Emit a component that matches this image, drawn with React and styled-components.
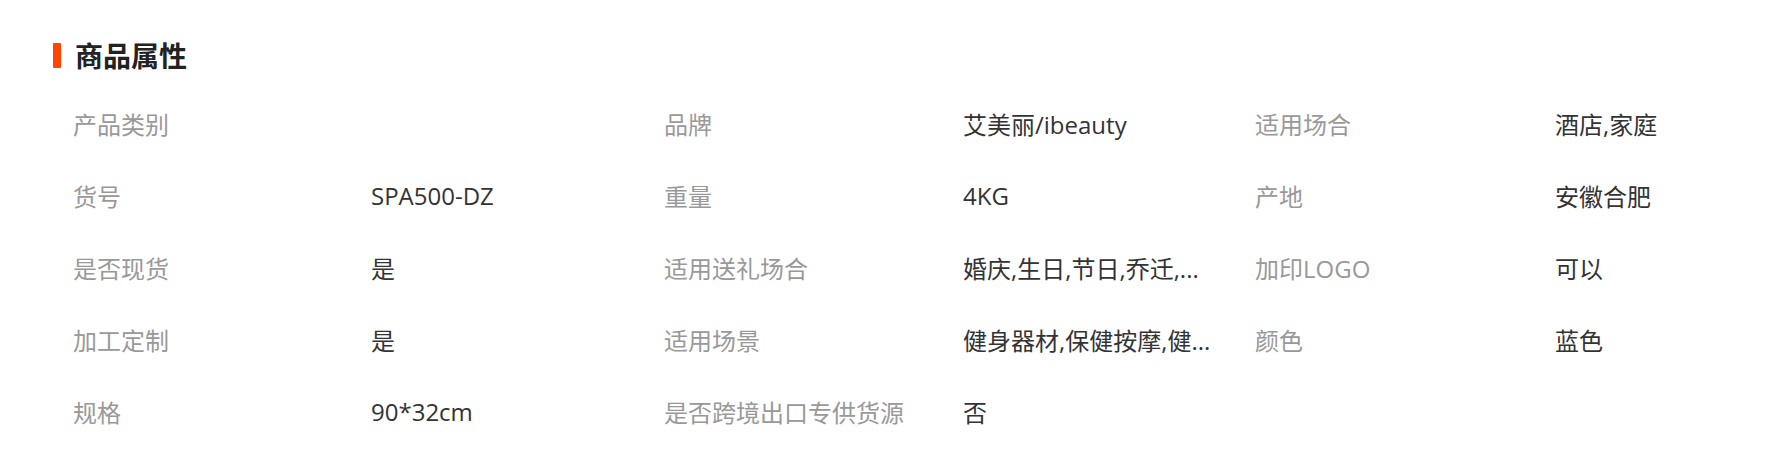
import React from "react";
import styled, { createGlobalStyle } from "styled-components";

const attributes = [
  ["产品类别", ""],
  ["品牌", "艾美丽/ibeauty"],
  ["适用场合", "酒店,家庭"],
  ["货号", "SPA500-DZ"],
  ["重量", "4KG"],
  ["产地", "安徽合肥"],
  ["是否现货", "是"],
  ["适用送礼场合", "婚庆,生日,节日,乔迁,..."],
  ["加印LOGO", "可以"],
  ["加工定制", "是"],
  ["适用场景", "健身器材,保健按摩,健..."],
  ["颜色", "蓝色"],
  ["规格", "90*32cm"],
  ["是否跨境出口专供货源", "否"],
];

const App = () => {
  return (
    <>
      <GlobalStyle />
      <Section>
        <Title>
          <Marker />
          <h2>商品属性</h2>
        </Title>
        <AttrGrid>
          {attributes.map(([label, value]) => (
            <React.Fragment key={label}>
              <Label>{label}</Label>
              <Value>{value}</Value>
            </React.Fragment>
          ))}
        </AttrGrid>
      </Section>
    </>
  );
};

const GlobalStyle = createGlobalStyle`
  body {
    margin: 0;
    background: #fff;
    font-family: "Open Sans", "Noto Sans CJK SC", sans-serif;
  }
`;

const Section = styled.div`
  padding: 37px 0 0 53px;
`;

const Title = styled.div`
  display: flex;
  align-items: center;
  gap: 14px;
  height: 36px;

  h2 {
    margin: 0;
    font-family: "Noto Sans CJK SC", sans-serif;
    font-size: 28px;
    font-weight: 700;
    color: #222;
    line-height: 36px;
  }
`;

const Marker = styled.span`
  width: 8px;
  height: 25px;
  border-radius: 1px;
  background-color: #ff4400;
`;

const AttrGrid = styled.div`
  display: grid;
  grid-template-columns: 298px 293px 299px 292px 300px 1fr;
  grid-auto-rows: 72px;
  margin-top: 14px;
  padding-left: 20px;
  font-size: 24px;
`;

const Label = styled.div`
  display: flex;
  align-items: center;
  color: #999;
  white-space: nowrap;
`;

const Value = styled.div`
  align-self: center;
  max-width: 270px;
  color: #333;
  white-space: nowrap;
  overflow: hidden;
  text-overflow: ellipsis;
`;

export default App;
